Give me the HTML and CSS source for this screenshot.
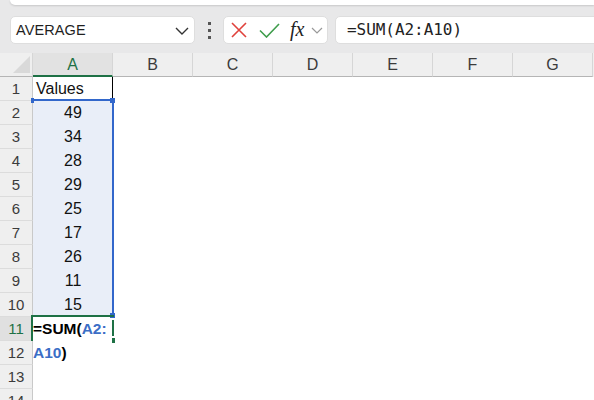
FILE: index.html
```html
<!DOCTYPE html>
<html>
<head>
<meta charset="utf-8">
<link rel="stylesheet" href="styles.css">
</head>
<body>
<div class="topbox"></div>
<div class="toolbar">
  <div class="namebox">
    <span class="name">AVERAGE</span>
    <svg class="chev" width="14" height="8" viewBox="0 0 14 8"><path d="M1 1 L7 7 L13 1" fill="none" stroke="#333" stroke-width="1.4"/></svg>
  </div>
  <div class="dots"><i></i><i></i><i></i></div>
  <div class="fxbox">
    <svg class="xicon" width="16" height="16" viewBox="0 0 16 16"><path d="M1 1 L15 15 M15 1 L1 15" stroke="#e0423c" stroke-width="1.6" fill="none"/></svg>
    <svg class="check" width="21" height="15" viewBox="0 0 21 15"><path d="M1 7.5 L7.5 14 L20 1" stroke="#3f9d4c" stroke-width="1.6" fill="none"/></svg>
    <span class="fx">fx</span>
    <svg class="chev2" width="12" height="7" viewBox="0 0 12 7"><path d="M1 1 L6 6 L11 1" fill="none" stroke="#999" stroke-width="1.2"/></svg>
  </div>
  <div class="formula">=SUM(A2:A10)</div>
</div>
<div class="sheet">
  <div class="hdr-row">
    <div class="corner"><svg width="33" height="24" viewBox="0 0 33 24"><path d="M30 3 L30 20 L13 20 Z" fill="#d9d9d9"/></svg></div>
    <div class="colhdr active">A</div>
    <div class="colhdr">B</div>
    <div class="colhdr">C</div>
    <div class="colhdr">D</div>
    <div class="colhdr">E</div>
    <div class="colhdr">F</div>
    <div class="colhdr">G</div>
  </div>
  <div class="body">
    <div class="rownums">
      <div class="rn">1</div>
      <div class="rn">2</div>
      <div class="rn">3</div>
      <div class="rn">4</div>
      <div class="rn">5</div>
      <div class="rn">6</div>
      <div class="rn">7</div>
      <div class="rn">8</div>
      <div class="rn">9</div>
      <div class="rn">10</div>
      <div class="rn active">11</div>
      <div class="rn">12</div>
      <div class="rn">13</div>
      <div class="rn">14</div>
    </div>
    <div class="colA">
      <div class="cell head">Values</div>
      <div class="cell num">49</div>
      <div class="cell num">34</div>
      <div class="cell num">28</div>
      <div class="cell num">29</div>
      <div class="cell num">25</div>
      <div class="cell num">17</div>
      <div class="cell num">26</div>
      <div class="cell num">11</div>
      <div class="cell num">15</div>
      <div class="cell edit"><span class="blk">=SUM(</span><span class="ref">A2:</span><br><span class="ref">A10</span><span class="blk">)</span></div>
      <div class="cell"></div>
      <div class="cell"></div>
      <div class="cell"></div>
    </div>
    <div class="selection">
      <i class="h h-tl"></i><i class="h h-tr"></i><i class="h h-br"></i>
    </div>
    <div class="editbox">
      <i class="e-right"></i><i class="e-handle"></i>
    </div>
  </div>
</div>
</body>
</html>
```
FILE: styles.css
```css
html, body {
  margin: 0;
  padding: 0;
}
body {
  width: 594px;
  height: 400px;
  overflow: hidden;
  background: #e8e8e9;
  font-family: "Liberation Sans", Arial, sans-serif;
  color: #222;
}
.topbox {
  height: 5px;
  margin-left: 10px;
  background: #fff;
  border-bottom-left-radius: 8px;
  box-shadow: 0 1px 2px rgba(0, 0, 0, 0.14);
}
.toolbar {
  display: flex;
  align-items: center;
  height: 28px;
  margin-top: 11px;
  padding-left: 10px;
}
.namebox {
  box-sizing: border-box;
  width: 185px;
  height: 28px;
  background: #fff;
  border: 1px solid #dedede;
  border-radius: 5px;
  display: flex;
  align-items: center;
  justify-content: space-between;
  padding: 0 5px 0 5px;
  font-size: 14.5px;
  color: #1f1f1f;
}
.name {
  letter-spacing: 0.1px;
}
.chev {
  display: block;
  margin-top: 1px;
}
.dots {
  width: 28px;
  height: 28px;
  display: flex;
  flex-direction: column;
  align-items: center;
  justify-content: center;
  gap: 4px;
}
.dots i {
  display: block;
  width: 3px;
  height: 3px;
  background: #555;
}
.fxbox {
  box-sizing: border-box;
  width: 105px;
  height: 28px;
  background: #fff;
  border: 1px solid #dedede;
  border-radius: 5px;
  display: flex;
  align-items: center;
  padding-left: 7px;
}
.xicon {
  display: block;
}
.check {
  display: block;
  margin-left: 12px;
}
.fx {
  margin-left: 10px;
  font-family: "Liberation Serif", "Times New Roman", serif;
  font-style: italic;
  font-size: 20px;
  line-height: 20px;
  color: #222;
  margin-top: -2px;
}
.chev2 {
  display: block;
  margin-left: 7px;
}
.formula {
  box-sizing: border-box;
  flex: 1;
  height: 28px;
  margin-left: 7px;
  margin-right: -10px;
  background: #fff;
  border: 1px solid #dedede;
  border-radius: 5px;
  padding-left: 11px;
  font-family: "DejaVu Sans Mono", "Liberation Mono", monospace;
  font-size: 16px;
  line-height: 26px;
  color: #222;
  letter-spacing: -0.05px;
}
.sheet {
  margin-top: 9px;
  background: #fff;
}
.hdr-row {
  display: flex;
  height: 24px;
  background: #efefef;
}
.corner {
  box-sizing: border-box;
  width: 33px;
  height: 24px;
  border-bottom: 1px solid #b5b5b5;
  border-right: 1px solid #d6d6d6;
}
.corner svg {
  display: block;
}
.colhdr {
  box-sizing: border-box;
  width: 80px;
  height: 24px;
  border-right: 1px solid #d6d6d6;
  border-bottom: 1px solid #b5b5b5;
  text-align: center;
  font-size: 16px;
  line-height: 23px;
  color: #3b3b3b;
}
.colhdr.active {
  background: #e2e2e2;
  color: #1e7145;
  border-bottom: 2px solid #1e7145;
}
.body {
  position: relative;
  display: flex;
}
.rownums {
  width: 33px;
  background: #efefef;
}
.rn {
  box-sizing: border-box;
  height: 24px;
  border-right: 1px solid #c9c9c9;
  border-bottom: 1px solid #dcdcdc;
  text-align: center;
  font-size: 15px;
  line-height: 24px;
  color: #3b3b3b;
}
.rn.active {
  background: #e0e0e0;
  color: #1e7145;
}
.colA {
  width: 80px;
}
.cell {
  box-sizing: border-box;
  height: 24px;
  font-size: 16px;
  line-height: 24px;
  color: #111;
}
.cell.head {
  padding-left: 3px;
  border-right: 1px solid #000;
}
.cell.num {
  background: #e9eef8;
  text-align: center;
}
.cell.edit {
  font-size: 15.5px;
  font-weight: bold;
  white-space: nowrap;
  overflow: visible;
  padding-left: 0;
  position: relative;
  z-index: 1;
}
.blk {
  color: #000;
}
.ref {
  color: #3b6ec6;
}
.selection {
  position: absolute;
  left: 33px;
  top: 22px;
  width: 81px;
  height: 218px;
  box-sizing: border-box;
  border: 2px solid #3267cb;
  border-left: none;
}
.h {
  position: absolute;
  width: 5px;
  height: 5px;
  background: #3267cb;
}
.h-tl {
  left: -2px;
  top: -3px;
  width: 3px;
}
.h-tr {
  right: -3px;
  top: -3px;
}
.h-br {
  right: -3px;
  bottom: -3px;
}
.editbox {
  position: absolute;
  left: 31px;
  top: 238px;
  width: 83px;
  height: 26px;
  box-sizing: border-box;
  border-top: 2px solid #1e7145;
  border-left: 2px solid #1e7145;
}
.e-right {
  position: absolute;
  right: 0;
  top: 3px;
  width: 2px;
  height: 16px;
  background: #1e7145;
}
.e-handle {
  position: absolute;
  right: -1px;
  top: 21px;
  width: 3px;
  height: 5px;
  background: #1e7145;
}
```
